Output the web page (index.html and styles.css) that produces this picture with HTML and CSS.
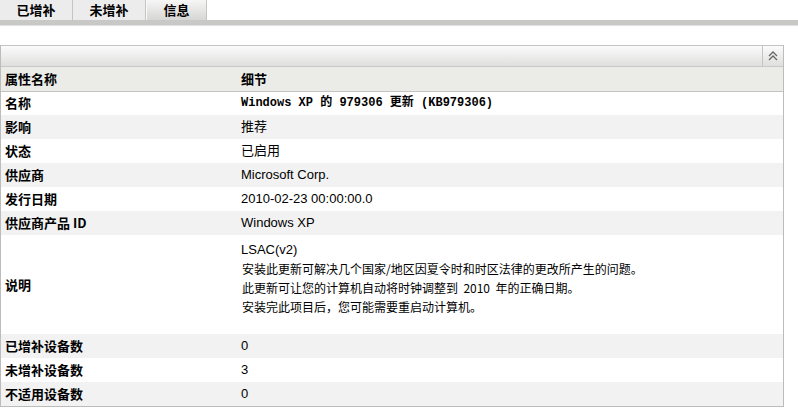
FILE: index.html
```html
<!DOCTYPE html>
<html lang="zh-CN">
<head>
  <meta charset="UTF-8">
  <title>信息</title>
  <link rel="stylesheet" href="styles.css">
</head>
<body>
  <div class="tabs">
    <div class="tab">已增补</div>
    <div class="tab">未增补</div>
    <div class="tab active">信息</div>
  </div>
  <div class="tab-line"></div>

  <div class="panel">
    <div class="panel-head">
      <span class="collapse">
        <svg width="12" height="12" viewBox="0 0 12 12">
          <path d="M2 6 L6 2 L10 6 M2 10 L6 6 L10 10" fill="none" stroke="#666" stroke-width="1.3"/>
        </svg>
      </span>
    </div>
    <table class="props">
      <thead>
        <tr><th class="name">属性名称</th><th>细节</th></tr>
      </thead>
      <tbody>
        <tr><td class="name">名称</td><td class="mono">Windows XP 的 979306 更新 (KB979306)</td></tr>
        <tr><td class="name">影响</td><td>推荐</td></tr>
        <tr><td class="name">状态</td><td>已启用</td></tr>
        <tr><td class="name">供应商</td><td>Microsoft Corp.</td></tr>
        <tr><td class="name">发行日期</td><td>2010-02-23 00:00:00.0</td></tr>
        <tr><td class="name">供应商产品 ID</td><td>Windows XP</td></tr>
        <tr class="tall">
          <td class="name">说明</td>
          <td class="desc">
            <div>LSAC(v2)</div>
            <div class="line">安装此更新可解决几个国家/地区因夏令时和时区法律的更改所产生的问题。</div>
            <div class="line">此更新可让您的计算机自动将时钟调整到&nbsp; 2010&nbsp; 年的正确日期。</div>
            <div class="line">安装完此项目后，您可能需要重启动计算机。</div>
          </td>
        </tr>
        <tr><td class="name">已增补设备数</td><td>0</td></tr>
        <tr><td class="name">未增补设备数</td><td>3</td></tr>
        <tr><td class="name">不适用设备数</td><td>0</td></tr>
      </tbody>
    </table>
  </div>
</body>
</html>
```

FILE: styles.css
```css
body {
  margin: 0;
  background-color: #ffffff;
  color: #000;
  font-family: "Liberation Sans", "Noto Sans CJK SC", sans-serif;
  font-size: 13px;
}

/* Tabs across the top */
.tabs {
  display: flex;
  height: 20px;
}
.tab {
  width: 72px;
  line-height: 20px;
  text-align: center;
  font-weight: bold;
  font-size: 13px;
  background-color: #ececec;
  border-right: 1px solid #c4c4c4;
  font-family: "Noto Sans CJK SC", sans-serif;
}
.tab.active {
  width: 59px;
  background: linear-gradient(#f6f6f6, #d6d6d4);
  border-left: 1px solid #fafafa;
}
.tab-line {
  height: 5px;
  background-color: #c8c8c6;
  border-bottom: 1px solid #e2e2e2;
}

/* Panel */
.panel {
  width: 782px;
  margin-top: 19px;
  border: 1px solid #bcbcbc;
  border-top-color: #c4c4c4;
}
.panel-head {
  display: flex;
  justify-content: flex-end;
  height: 20px;
  background: linear-gradient(#fbfbfb, #dfdfdd);
  border-bottom: 1px solid #c8c8c8;
}
.collapse {
  width: 20px;
  display: flex;
  align-items: center;
  justify-content: center;
  border-left: 1px solid #c4c4c4;
}

/* Property table */
.props {
  width: 100%;
  border-collapse: collapse;
}
.props tr {
  height: 24px;
}
.props th {
  padding: 0 4px;
  line-height: 16px;
  text-align: left;
  font-size: 13px;
  font-family: "Noto Sans CJK SC", sans-serif;
  background-color: #ebebe8;
  border-bottom: 1px solid #c4c4c4;
}
.props td {
  padding: 0 4px;
  line-height: 16px;
  vertical-align: middle;
}
.props .name {
  width: 228px;
  font-weight: bold;
  font-size: 13px;
  font-family: "Noto Sans CJK SC", sans-serif;
}
.props tbody tr:nth-child(even) {
  background-color: #f2f2f2;
}
.mono {
  font-family: "Liberation Mono", "Noto Sans CJK SC", monospace;
  font-size: 12px;
  font-weight: bold;
}
.props tr.tall {
  height: 99px;
}
.props td.desc {
  padding: 5px 4px 18px;
  line-height: 19px;
  vertical-align: top;
}
.desc .line {
  padding-left: 1px;
  font-size: 12px;
  font-family: "Noto Sans CJK SC", sans-serif;
}
```
